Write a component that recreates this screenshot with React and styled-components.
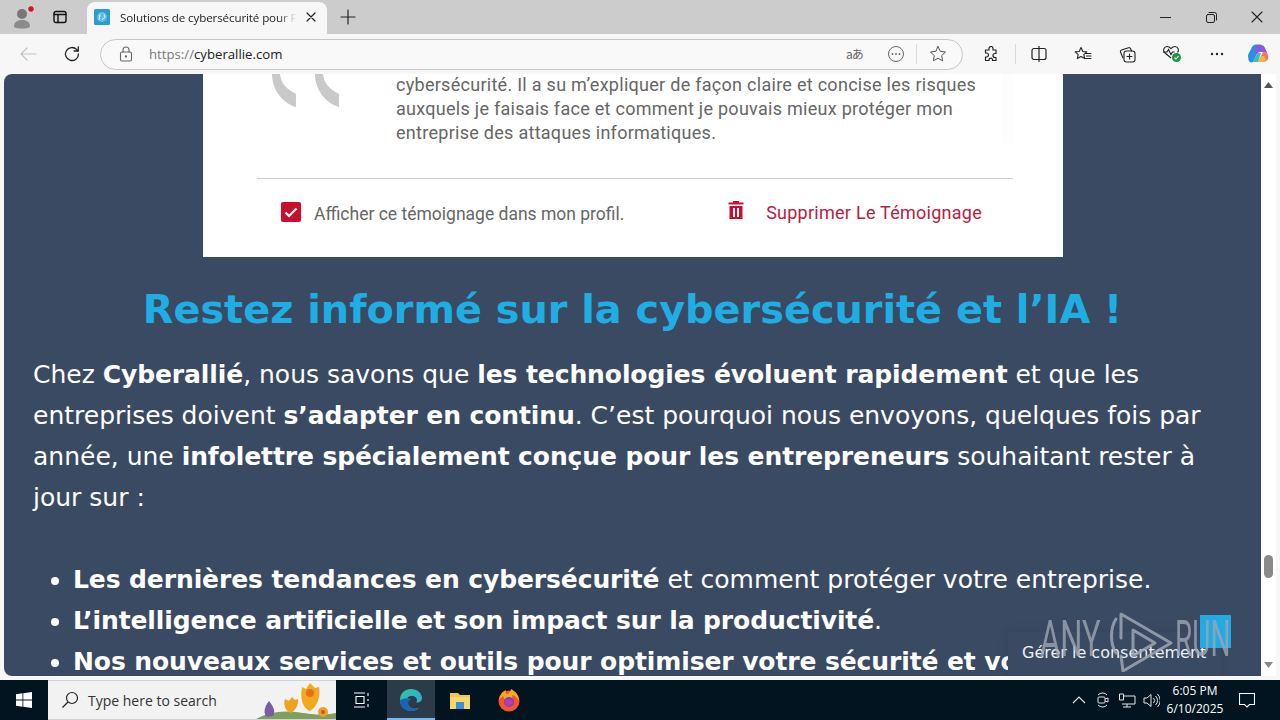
import React from "react";
import styled, { createGlobalStyle } from "styled-components";

const Global = createGlobalStyle`
  html, body { margin: 0; padding: 0; width: 1280px; height: 720px; overflow: hidden; background: #f7f7f7; }
  * { box-sizing: border-box; }
`;
const Screen = styled.div`
  width: 1280px; height: 720px; display: flex; flex-direction: column; overflow: hidden;
  font-family: "Open Sans", "Noto Sans", sans-serif;
`;
const TabStrip = styled.div`
  height: 34px; flex: none; background: #cccccc; display: flex; align-items: flex-end;
`;
const ProfileSlot = styled.div`
  width: 44px; height: 34px; display: flex; align-items: center; justify-content: center; padding-left: 3px;
`;
const TabsSlot = styled.div`
  width: 43px; height: 34px; display: flex; align-items: center; justify-content: center; padding-right: 11px;
`;
const Tab = styled.div`
  width: 240px; height: 32px; background: #f7f7f7; border-radius: 8px 8px 0 0; display: flex; align-items: center;
  padding: 0 11px 2px 7px; gap: 10px; color: #222;
`;
const TabTitle = styled.span`
  flex: 1; white-space: nowrap; overflow: hidden; font-size: 11.6px; letter-spacing: -.12px;
  mask-image: linear-gradient(to right, #000 90%, transparent 100%);
`;
const NewTab = styled.div`
  width: 42px; height: 34px; display: flex; align-items: center; justify-content: center;
`;
const Spacer = styled.div`flex: 1;`;
const WinButton = styled.div`
  width: 46px; height: 34px; display: flex; align-items: center; justify-content: center;
`;
const Toolbar = styled.div`
  height: 40px; flex: none; background: #f7f7f7; display: flex; align-items: center;
`;
const NavButton = styled.div`
  width: 44px; height: 32px; flex: none; display: flex; align-items: center; justify-content: center;
  &:first-child { margin-left: 6px; }
`;
const AddressBar = styled.div`
  width: 863px; height: 31px; flex: none; margin-left: 6px; border: 1px solid #c6c6c6; border-radius: 16px; background: #f9f9f9;
  display: flex; align-items: center; padding: 0 4px 0 18px;
`;
const Url = styled.div`
  flex: 1; margin-left: 16px; font-size: 13.2px; color: #222;
  span { color: #777; }
`;
const BarIcons = styled.div`
  display: flex; align-items: center;
`;
const BarIcon = styled.div`
  width: 41px; display: flex; align-items: center; justify-content: center;
`;
const ReadAloud = styled.span`
  font-family: "Noto Sans CJK JP", "Open Sans", sans-serif; font-size: 12px; line-height: 16px; color: #666; white-space: nowrap; letter-spacing: -1px;
`;
const BarSep = styled.div`
  width: 1px; height: 20px; background: #dcdcdc; flex: none;
`;
const ToolSep = styled(BarSep)`
  margin: 0 1px; background: #d9d9d9;
`;
const ToolIcons = styled.div`
  display: flex; align-items: center; flex: none; margin-left: 6px;
`;
const ToolIcon = styled.div`
  width: ${p => p.$w || 44.5}px; height: 32px; flex: none; display: flex; align-items: center; justify-content: center;
`;
const Viewport = styled.div`
  flex: 1; display: flex; min-height: 0; padding-left: 4px; background: #f7f7f7;
`;
const Page = styled.div`
  width: 1257px; height: 602px; background: #3b4a63; border-radius: 8px 0 0 8px; overflow: hidden; position: relative;
  font-family: "DejaVu Sans", Verdana, sans-serif; color: #fff;
`;
const Card = styled.div`
  width: 860px; height: 183px; margin-left: 199px; background: #fff; position: relative; padding: 0 50px 0 54px;
  display: flex; flex-direction: column;
`;
const Quote = styled.div`
  position: absolute; left: 69px; top: 0; line-height: 0;
`;
const Testimonial = styled.div`
  padding-left: 139px; margin-top: -1px; font-family: Roboto, sans-serif; font-size: 18px; letter-spacing: .28px; line-height: 24px; color: #666;
  height: 70px; white-space: nowrap; border-right: 11px solid #fdfdfd;
`;
const CardRule = styled.div`
  height: 1px; background: #cfcfcf; margin-top: 35px;
`;
const CardFooter = styled.div`
  display: flex; align-items: center; height: 70px; padding: 0 31px 0 24px;
  font-family: Roboto, sans-serif;
`;
const Check = styled.div`
  width: 20px; height: 20px; border-radius: 2px; background: #c8102e; display: flex; align-items: center; justify-content: center; margin-right: 13px; margin-top: -4px;
`;
const CheckLabel = styled.span`
  color: #666; flex: 1; font-size: 17.5px;
`;
const Remove = styled.span`
  color: #b5213f; display: flex; align-items: center; gap: 22px; font-size: 18px; letter-spacing: .26px; margin-bottom: 4px;
`;
const TrashIcon = styled.svg`
  margin-top: -4px;
`;
const Heading = styled.h2`
  margin: 27px 0 0; font-size: 39.8px; line-height: 50px; font-weight: 700; color: #1faee4; text-align: center; white-space: nowrap;
`;
const Body = styled.div`
  padding: 20px 29px 0; font-size: 25px; line-height: 41px;
  b { letter-spacing: -.1px; }
`;
const Para = styled.p`margin: 0 0 41px;`;
const List = styled.ul`
  margin: 0; padding: 0 0 0 40px; white-space: nowrap;
`;
const Scrollbar = styled.div`
  width: 15px; height: 602px; flex: none; background: #fff; position: relative;
  display: flex; flex-direction: column; align-items: center; justify-content: space-between; padding: 8px 0;
`;
const Thumb = styled.div`
  position: absolute; top: 481px; left: 3px; width: 9px; height: 23px; border-radius: 5px; background: #8a8a8a;
`;
const Consent = styled.div`
  position: absolute; left: 1004px; top: 558px; width: 213px; height: 50px; background: #3b4a63;
  box-shadow: 0 0 10px rgba(0,0,0,.12); padding: 11px 0 0 14px; font-size: 16px; color: #eef0f3; white-space: nowrap;
`;
const Mark = styled.div`
  position: absolute; left: 1036px; top: 530px; width: 200px; height: 70px; pointer-events: none;
  display: flex; align-items: center;
  font-family: Roboto, sans-serif; font-size: 50px; font-weight: 400; line-height: 1; color: rgba(158,165,178,.8);
`;
const MarkBlue = styled.div`
  position: absolute; left: 160px; top: 11px; width: 31px; height: 33px; background: #22aae3;
`;
const MarkWord = styled.span`
  position: relative; flex: none; transform: scaleX(${p => p.$sx}); transform-origin: left center; width: ${p => p.$w}px; white-space: nowrap;
`;
const MarkPlay = styled.svg`
  position: relative; flex: none;
`;
const Taskbar = styled.div`
  height: 40px; flex: none; background: #021420; display: flex; align-items: stretch; color: #fff;
`;
const StartBtn = styled.div`
  width: 48px; display: flex; align-items: center; justify-content: center;
`;
const SearchBox = styled.div`
  width: 288px; background: #f2f2f2; border: solid #cfd3d6; border-width: 1px 0; display: flex; align-items: center; padding-left: 13px; gap: 9px; position: relative; overflow: hidden;
  font-size: 14px; color: #333;
`;
const Flowers = styled.svg`
  position: absolute; right: 0; top: 0;
`;
const TaskIcon = styled.div`
  width: ${p => p.$w || 48}px; display: flex; align-items: center; justify-content: center;
  background: ${p => p.$active ? "#2b3c48" : "transparent"};
  border-bottom: ${p => p.$active ? "2px solid #76b9ed" : "none"};
  padding-top: ${p => p.$active ? "2px" : "0"};
`;
const Tray = styled.div`
  display: flex; align-items: center; margin-right: 4px;
`;
const TrayCell = styled.div`
  width: 24px; display: flex; align-items: center; justify-content: center;
`;
const Clock = styled.div`
  width: 56px; text-align: center; font-size: 12px; line-height: 18px; display: flex; flex-direction: column; justify-content: center; color: #fff; white-space: nowrap; align-items: center;
`;
const Notif = styled.div`
  width: 48px; margin-right: 9px; display: flex; align-items: center; justify-content: center;
`;

const S = { fill: "none", stroke: "#222", strokeWidth: 1.2, strokeLinecap: "round", strokeLinejoin: "round" };
const I = ({ w = 18, h = 18, children, ...r }) => <svg width={w} height={h} viewBox={`0 0 ${w} ${h}`} {...S} {...r}>{children}</svg>;

export default function App() {
  return (
    <Screen>
      <Global />
      <TabStrip>
        <ProfileSlot>
          <svg width="26" height="26" viewBox="0 0 26 26">
            <circle cx="11" cy="10" r="5" fill="#777" />
            <path d="M3 23c0-5 3-7 8-7s8 2 8 7c-4 2-12 2-16 0z" fill="#8b8b8b" />
            <circle cx="20" cy="5" r="3.4" fill="#d6132a" stroke="#e8e8e8" strokeWidth="1" />
          </svg>
        </ProfileSlot>
        <TabsSlot>
          <I w={14} h={14} stroke="#111" strokeWidth={1.4}><rect x="1" y="1.5" width="12" height="11" rx="2" /><path d="M1 4.5h12M5 4.5v8" /></I>
        </TabsSlot>
        <Tab>
          <svg width="16" height="16" viewBox="0 0 16 16">
            <rect width="16" height="16" rx="1.5" fill="#2e9bd0" />
            <circle cx="8" cy="8" r="5" fill="#63bde6" />
            <path d="M6 5l-1 6M10 5l1 3-3 3" stroke="#d8effa" fill="none" strokeWidth="1" />
          </svg>
          <TabTitle>Solutions de cybersécurité pour PME</TabTitle>
          <I w={10} h={10} stroke="#222" strokeWidth={1.2}><path d="M1 1l8 8M9 1l-8 8" /></I>
        </Tab>
        <NewTab>
          <I w={16} h={16} stroke="#222" strokeWidth={1.2}><path d="M8 1v14M1 8h14" /></I>
        </NewTab>
        <Spacer />
        <WinButton><I w={11} h={3} stroke="#222" strokeWidth={1}><path d="M0 1.5h11" /></I></WinButton>
        <WinButton><I w={11} h={11} stroke="#222" strokeWidth={1}><rect x=".5" y="2.5" width="8" height="8" rx="1.5" /><path d="M3 .5h5.5a2 2 0 0 1 2 2V8" /></I></WinButton>
        <WinButton><I w={12} h={12} stroke="#222" strokeWidth={1.1}><path d="M1 1l10 10M11 1L1 11" /></I></WinButton>
      </TabStrip>
      <Toolbar>
        <NavButton>
          <I w={18} h={14} stroke="#c4c4c4" strokeWidth={1.2}><path d="M2 7h15M8 1L2 7l6 6" /></I>
        </NavButton>
        <NavButton>
          <I w={18} h={18} stroke="#222" strokeWidth={1.3}><path d="M15.5 9A6.5 6.5 0 1 1 13.6 4.4L15 6" /><path d="M15.3 1.8V6h-4.2" /></I>
        </NavButton>
        <AddressBar>
          <I w={14} h={16} stroke="#666" strokeWidth={1.1}><rect x="1.5" y="6" width="11" height="9" rx="1.5" /><path d="M4 6V4a3 3 0 0 1 6 0v2" /><circle cx="7" cy="10.5" r=".6" fill="#666" /></I>
          <Url><span>https://</span>cyberallie.com</Url>
          <BarIcons>
            <BarIcon><ReadAloud>aあ</ReadAloud></BarIcon>
            <BarIcon>
              <svg width="18" height="18" viewBox="0 0 18 18" fill="none" stroke="#666" strokeWidth="1"><circle cx="9" cy="9" r="7.500" /><circle cx="5.500" cy="9" r=".9" fill="#666" stroke="none" /><circle cx="9" cy="9" r=".9" fill="#666" stroke="none" /><circle cx="12.500" cy="9" r=".9" fill="#666" stroke="none" /></svg>
            </BarIcon>
            <BarSep />
            <BarIcon>
              <I w={18} h={18} stroke="#555" strokeWidth={1}><path d="M9 1.500l2.300 4.800 5.200.7-3.800 3.600.9 5.200L9 13.300l-4.600 2.500.9-5.200L1.500 7l5.200-.7z" /></I>
            </BarIcon>
          </BarIcons>
        </AddressBar>
        <ToolIcons>
          <ToolIcon>
            <I w={16} h={16} stroke="#222" strokeWidth={1.2}><path d="M6 2.500a2 2 0 0 1 4 0V4h3v3.500h-1a2 2 0 0 0 0 4h1V14.500H9.500v-1a1.800 1.800 0 0 0-3.500 0v1H2.500V11h1a2 2 0 0 0 0-4h-1V4H6z" /></I>
          </ToolIcon>
          <ToolSep />
          <ToolIcon>
            <I w={16} h={16} stroke="#222" strokeWidth={1.2}><rect x="1" y="2.500" width="14" height="11" rx="2" /><path d="M8 .5v15" /></I>
          </ToolIcon>
          <ToolIcon>
            <I w={18} h={16} stroke="#222" strokeWidth={1.1}><path d="M7 1.500l1.800 4 4 .4-3 2.700.9 4L7 10.500l-3.700 2.100.9-4-3-2.700 4-.4zM12 7.500h5M12.500 10h4.500M11.500 12.500h5.500" /></I>
          </ToolIcon>
          <ToolIcon>
            <I w={17} h={17} stroke="#222" strokeWidth={1.1}><rect x="5" y="5" width="11" height="11" rx="2.500" /><path d="M10.500 8v5M8 10.500h5M12.500 5l-1-2.500a1.500 1.500 0 0 0-2-.8L2.500 4a1.500 1.500 0 0 0-1 2L4 12" /></I>
          </ToolIcon>
          <ToolIcon>
            <svg width="20" height="18" viewBox="0 0 20 18" fill="none" stroke="#222" strokeWidth="1.1"><path d="M9 13L2.500 7.500C.5 5.500 2 1.500 5 1.500c2 0 3 1 4 2.200 1-1.200 2-2.200 4-2.200 3 0 4.500 4 2.500 6" /><path d="M1 7h4l1.500-2.500L9 9.500 10.500 7h2" /><circle cx="14.500" cy="12.500" r="4.500" fill="#169b42" stroke="none" /><path d="M12.500 12.500l1.500 1.500 2.500-2.800" stroke="#fff" /></svg>
          </ToolIcon>
          <ToolIcon>
            <svg width="14" height="4" viewBox="0 0 14 4"><circle cx="2" cy="2" r="1.200" fill="#222" /><circle cx="7" cy="2" r="1.200" fill="#222" /><circle cx="12" cy="2" r="1.200" fill="#222" /></svg>
          </ToolIcon>
          <ToolIcon $w={38}>
            <svg width="23" height="20" viewBox="0 0 23 20">
              <path d="M5 3c1-2 3-2.500 5-2.500h4L9 12 6 18c-2 1-4 0-4.500-2L1 12c0-2 1-3 2-5z" fill="#2b8fe8" />
              <path d="M9 1h5c2 0 3 1 4 3l3 7c-1-2-3-3-5-3h-3c-2 0-2 1-3 3L8 8z" fill="#8a5be0" />
              <path d="M16 8c2 0 4 1 5 3 1 3 0 5-2 6-1 1-2 1-4 1h-4l3-6z" fill="#f2765a" />
              <path d="M6 18c2-4 3-7 5-9h3l-3 9z" fill="#37c4b0" />
              <path d="M11 18h4c2 0 3-1 4-2l-2-4h-3z" fill="#f4b63e" />
            </svg>
          </ToolIcon>
        </ToolIcons>
      </Toolbar>
      <Viewport>
        <Page>
          <Card>
            <Quote>
              <svg width="67" height="33" viewBox="0 0 67 33" fill="#c9c9c9">
                <path d="M0 0h8c1 9 6 15 16 20v13C10 29 0 15 0 0z" />
                <path d="M43 0h8c1 9 6 15 16 20v13C53 29 43 15 43 0z" />
              </svg>
            </Quote>
            <Testimonial>
              cybersécurité. Il a su m’expliquer de façon claire et concise les risques<br />
              auxquels je faisais face et comment je pouvais mieux protéger mon<br />
              entreprise des attaques informatiques.
            </Testimonial>
            <CardRule />
            <CardFooter>
              <Check>
                <svg width="14" height="11" viewBox="0 0 14 11" fill="none" stroke="#fff" strokeWidth="2.200"><path d="M1.500 5.500l3.500 3.500 7.500-7.500" /></svg>
              </Check>
              <CheckLabel>Afficher ce témoignage dans mon profil.</CheckLabel>
              <Remove>
                <TrashIcon width="16" height="20" viewBox="0 0 16 20"><path d="M5 1h6v1.500h4.500V4.500H.5V2.500H5zM1.500 6h13v13h-13zM5 8v9h2V8zM9 8v9h2V8z" fill="#c8102e" fillRule="evenodd" /></TrashIcon>
                Supprimer Le Témoignage
              </Remove>
            </CardFooter>
          </Card>
          <Heading>Restez informé sur la cybersécurité et l’IA !</Heading>
          <Body>
            <Para>
              Chez <b>Cyberallié</b>, nous savons que <b>les technologies évoluent rapidement</b> et que les entreprises doivent <b>s’adapter en continu</b>. C’est pourquoi nous envoyons, quelques fois par année, une <b>infolettre spécialement conçue pour les entrepreneurs</b> souhaitant rester à jour sur :
            </Para>
            <List>
              <li><b>Les dernières tendances en cybersécurité</b> et comment protéger votre entreprise.</li>
              <li><b>L’intelligence artificielle et son impact sur la productivité</b>.</li>
              <li><b>Nos nouveaux services et outils pour optimiser votre sécurité et votre</b></li>
            </List>
          </Body>
          <Consent>Gérer le consentement</Consent>
          <Mark>
            <MarkBlue />
            <MarkWord $w={69} $sx={0.62}>ANY</MarkWord>
            <MarkPlay width="66" height="66" viewBox="0 0 66 66" fill="none" stroke="rgba(158,165,178,.85)" strokeWidth="3" strokeLinejoin="round" strokeLinecap="round">
              <path d="M7 13C1 22 1 38 7 47" />
              <path d="M12 32V8l50 29-48 28-2-15" />
              <path d="M24 24l22 13-22 13z" />
            </MarkPlay>
            <MarkWord $w={55} $sx={0.56}>RUN</MarkWord>
          </Mark>
        </Page>
        <Scrollbar>
          <svg width="9" height="6" viewBox="0 0 9 6"><path d="M4.500 0L9 6H0z" fill="#555" /></svg>
          <Thumb />
          <svg width="9" height="6" viewBox="0 0 9 6"><path d="M0 0h9L4.500 6z" fill="#888" /></svg>
        </Scrollbar>
      </Viewport>
      <Taskbar>
        <StartBtn>
          <svg width="16" height="16" viewBox="0 0 16 16" fill="#fff"><path d="M0 2.200L6.500 1.300v6.300H0zM7.300 1.200L16 0v7.600H7.300zM0 8.400h6.500v6.300L0 13.800zM7.300 8.400H16V16l-8.700-1.200z" /></svg>
        </StartBtn>
        <SearchBox>
          <svg width="18" height="18" viewBox="0 0 18 18" fill="none" stroke="#222" strokeWidth="1.200"><circle cx="11" cy="7" r="5.500" /><path d="M7 11l-5.500 5.500" /></svg>
          <span>Type here to search</span>
          <Flowers width="80" height="38" viewBox="0 0 80 38">
            <path d="M0 38c10-6 25-9 40-7s22 4 40 1v6z" fill="#7f9f5e" />
            <path d="M11 36c-4-3-3-10 2-16 4 5 7 10 4 15z" fill="#7a5ba8" />
            <path d="M35 32c-6-2-8-9-6-14l4 2 3-4 3 3 3-1c1 5-2 11-7 14z" fill="#eda320" />
            <path d="M54 30c-8-3-10-14-8-24l4 2 4-6 5 5 4-1c2 10-2 20-9 24z" fill="#f3a91d" />
            <circle cx="54" cy="12" r="4" fill="#e2711d" />
            <circle cx="67" cy="31" r="5" fill="#ee9f2b" />
            <circle cx="67" cy="31" r="2" fill="#c65b17" />
          </Flowers>
        </SearchBox>
        <TaskIcon $w={51}>
          <svg width="16" height="16" viewBox="0 0 16 16" fill="none" stroke="#fff" strokeWidth="1.100"><path d="M0 1h11M0 15h11M2 4.500h8v7H2zM14 1v3M14 7v2M14 12v3" /></svg>
        </TaskIcon>
        <TaskIcon $active $w={48}>
          <svg width="24" height="24" viewBox="0 0 24 24">
            <defs>
              <linearGradient id="edgeA" x1="0" y1="0" x2="1" y2="1"><stop offset="0" stopColor="#35c1a0" /><stop offset="1" stopColor="#2ea9e0" /></linearGradient>
            </defs>
            <path d="M12 1C5 1 1 6 1 12c0 7 6 11 11 11 3 0 6-1 8-3-5 2-11 0-11-5 0-2 1-3 3-4-1 0-2 0-3-.5C8 9 10 8 13 8c3 0 5 2 5 4 0 1-.5 2-1 2.500 3 .5 6-1 6-4C23 5 18 1 12 1z" fill="url(#edgeA)" />
            <path d="M1 12c0 7 6 11 11 11 3 0 6-1 8-3-5 2-11 0-11-5 0-2 1-3 3-4-4-2-9 0-11 1z" fill="#1764b8" />
          </svg>
        </TaskIcon>
        <TaskIcon $w={49}>
          <svg width="22" height="20" viewBox="0 0 22 20">
            <path d="M1 3h8l2 2h10v14H1z" fill="#f1c84b" />
            <path d="M1 7h20v12H1z" fill="#f6d86e" />
            <rect x="7" y="12" width="8" height="7" fill="#3f8fd8" />
          </svg>
        </TaskIcon>
        <TaskIcon $w={49}>
          <svg width="24" height="24" viewBox="0 0 24 24">
            <circle cx="12" cy="13" r="10.500" fill="#f0562a" />
            <path d="M2 12C3 6 6 3 9 2c-1 3 0 4 2 4 2-2 3-4 3-5 4 2 8 6 8 12-2-4-4-5-7-6 1 3 0 5-3 5-3 1-5-1-6-4-1 1-3 2-4 4z" fill="#fba61d" />
            <circle cx="12" cy="14" r="5" fill="#7b3fc7" />
            <path d="M8 13c2-2 6-2 8 1-1 3-4 4-6 3-2-.5-2-3-2-4z" fill="#c23aa7" />
          </svg>
        </TaskIcon>
        <Spacer />
        <Tray>
          <TrayCell><svg width="14" height="8" viewBox="0 0 14 8" fill="none" stroke="#e6e6e6" strokeWidth="1.100"><path d="M1 7l6-6 6 6" /></svg></TrayCell>
          <TrayCell><svg width="14" height="16" viewBox="0 0 14 16" fill="none" stroke="#e6e6e6" strokeWidth="1"><path d="M2 3a6 6 0 0 1 9 0M2 13a6 6 0 0 0 9 0" /><rect x="2" y="5" width="7" height="6" rx="1" /><path d="M9 7l3-1v4l-3-1" /></svg></TrayCell>
          <TrayCell><svg width="17" height="15" viewBox="0 0 17 15" fill="none" stroke="#e6e6e6" strokeWidth="1"><path d="M5 3h11v8H3M0.500 1h4v6h-4zM8 11v3M4 14h8" /></svg></TrayCell>
          <TrayCell><svg width="17" height="15" viewBox="0 0 17 15" fill="none" stroke="#e6e6e6" strokeWidth="1"><path d="M1 5h3l4-3.500v12L4 10H1zM10.500 5a3.500 3.500 0 0 1 0 5M12.500 3a6 6 0 0 1 0 9M14.500 1a9 9 0 0 1 0 13" /></svg></TrayCell>
        </Tray>
        <Clock><span>6:05 PM</span><span>6/10/2025</span></Clock>
        <Notif>
          <svg width="16" height="16" viewBox="0 0 16 16" fill="none" stroke="#fff" strokeWidth="1.100"><path d="M.5 1.500h15v11h-5L8 15l-2.500-2.500h-5z" /></svg>
        </Notif>
      </Taskbar>
    </Screen>
  );
}
